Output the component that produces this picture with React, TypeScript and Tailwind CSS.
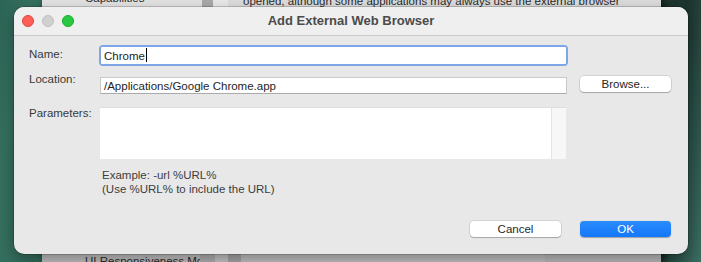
import React from "react";

const FONT = { fontFamily: '"Liberation Sans", Arial, sans-serif' };

function Backdrop() {
  return (
    <div className="absolute left-[42px] top-0 flex h-full w-[619px] flex-col shadow-[3px_0_8px_rgba(0,0,0,0.7)]">
      <div className="flex h-[131px] text-[11.5px] text-[#2a2a2a]">
        <div className="w-[160px] bg-[#e3e3e3] pl-[43px]">
          <div className="-mt-[9px] leading-[14px]">Capabilities</div>
        </div>
        <div className="w-[11px] bg-[#a9a9a9]" />
        <div className="w-[15px] bg-[#e9e9e9]" />
        <div className="flex-1 overflow-hidden whitespace-nowrap bg-[#dddddd] pl-[15px]">
          <div className="-mt-[6px] leading-[14px]">
            opened, although some applications may always use the external browser
          </div>
        </div>
      </div>
      <div className="flex flex-1 text-[11.5px] text-[#2a2a2a]">
        <div className="flex w-[158px] flex-col justify-end overflow-hidden whitespace-nowrap bg-[#c3c3c3] pl-[43px]">
          <div className="-mb-[6px] leading-[14px]">UI Responsiveness Mo</div>
        </div>
        <div className="w-[15px] bg-[#b3b3b3]" />
        <div className="w-[13px] bg-[#c9c9c9]" />
        <div className="w-[13px] bg-[#a9a9a9]" />
        <div className="w-[304px] bg-[#c5c5c5]" />
        <div className="flex-1 bg-[#bdbdbd]" />
      </div>
    </div>
  );
}

function TrafficLights() {
  return (
    <div className="absolute left-[8px] top-[8px] flex gap-[8px]">
      <span className="h-[12px] w-[12px] rounded-full border border-[#e1443e] bg-[#fe5f57]" />
      <span className="h-[12px] w-[12px] rounded-full border border-[#bdbdbd] bg-[#d0d0d0]" />
      <span className="h-[12px] w-[12px] rounded-full border border-[#1aab29] bg-[#28c840]" />
    </div>
  );
}

function PushButton({ label, primary }: { label: string; primary?: boolean }) {
  return (
    <div
      className={
        primary
          ? "h-[16px] w-[91px] rounded-[4px] bg-[linear-gradient(#2a8bfc,#1378f9)] text-center text-[11.5px] leading-[16px] text-white shadow-[0_0.5px_1px_rgba(0,0,0,0.3)]"
          : "h-[16px] w-[91px] rounded-[4px] bg-white text-center text-[11.5px] leading-[16px] text-[#262626] shadow-[0_0_0_0.5px_rgba(0,0,0,0.18),0_1px_1px_rgba(0,0,0,0.22)]"
      }
    >
      {label}
    </div>
  );
}

export default function App() {
  return (
    <div
      className="relative h-[262px] w-[701px] overflow-hidden bg-[linear-gradient(100deg,#2c6556_0%,#35705f_4%,#2a5d50_60%,#1c332d_92%,#3a6e61_100%)]"
      style={FONT}
    >
      <Backdrop />

      <div className="absolute left-[14px] top-[7px] flex h-[247px] w-[674px] flex-col overflow-hidden rounded-[10px] bg-[#e8e8e8] shadow-[0_0_0_0.5px_rgba(0,0,0,0.35),0_6px_16px_rgba(0,0,0,0.35)]">
        <div className="relative flex h-[29px] shrink-0 items-center justify-center border-b border-[#c8c8c8] bg-[#efefef] pb-[1px]">
          <TrafficLights />
          <span className="text-[13px] font-bold text-[#4b4b4b]">Add External Web Browser</span>
        </div>

        <div className="flex flex-col pl-[15px] pr-[17px] text-[11.5px] text-[#3a3a3a]">
          <div className="mt-[9px] flex items-start">
            <div className="mt-[2px] w-[71px] leading-[14px]">Name:</div>
            <div className="-ml-[1px] h-[21px] w-[469px] rounded-[4px] bg-[#7ea6e7] p-[2px]">
              <div className="flex h-full items-start rounded-[1px] bg-white pl-[3px] pt-[2px] leading-[14px] text-[#1e1e1e]">
                <span>Chrome</span>
                <span className="ml-[1px] mt-[-1px] h-[14px] w-[1px] bg-black" />
              </div>
            </div>
          </div>

          <div className="mt-[11px] flex items-start">
            <div className="-mt-[5px] w-[71px] leading-[14px]">Location:</div>
            <div className="h-[17px] w-[467px] border border-[#c9c9c9] border-b-[#aaaaaa] bg-white pl-[3px] pt-[1px] leading-[14px] text-[#1e1e1e]">
              /Applications/Google Chrome.app
            </div>
            <div className="-mt-[1px] ml-[13px]">
              <PushButton label="Browse..." />
            </div>
          </div>

          <div className="mt-[13px] flex items-start">
            <div className="-mt-[1px] w-[71px] leading-[14px]">Parameters:</div>
            <div className="flex h-[52px] w-[466px] border-t border-[#dedede] bg-white">
              <div className="flex-1" />
              <div className="w-[15px] border-l border-[#e4e4e4] bg-[#f7f7f7]" />
            </div>
          </div>

          <div className="mt-[9px] pl-[73px] leading-[14px] text-[#3d3d3d]">
            <div>Example: -url %URL%</div>
            <div>(Use %URL% to include the URL)</div>
          </div>

          <div className="mt-[25px] flex justify-end gap-[19px]">
            <PushButton label="Cancel" />
            <PushButton label="OK" primary />
          </div>
        </div>
      </div>
    </div>
  );
}
